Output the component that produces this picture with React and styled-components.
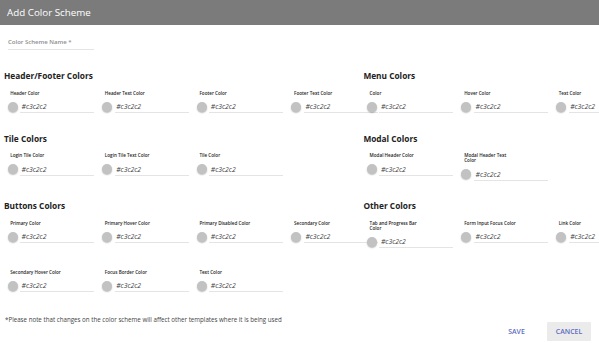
import React from 'react';
import styled, { createGlobalStyle } from 'styled-components';

const GlobalStyle = createGlobalStyle`
    html, body {
        margin: 0;
        padding: 0;
        background: #fff;
        overflow: hidden;
    }
    body {
        font-family: "Open Sans", "Noto Sans", sans-serif;
        color: #333;
    }
`;

const HEX = '#c3c2c2';

const sections = [
    {
        title: 'Header/Footer Colors',
        rows: [['Header Color', 'Header Text Color', 'Footer Color', 'Footer Text Color']],
    },
    {
        title: 'Menu Colors',
        rows: [['Color', 'Hover Color', 'Text Color']],
    },
    {
        title: 'Tile Colors',
        rows: [['Login Tile Color', 'Login Tile Text Color', 'Tile Color']],
    },
    {
        title: 'Modal Colors',
        rows: [['Modal Header Color', 'Modal Header Text Color']],
    },
    {
        title: 'Buttons Colors',
        rows: [
            ['Primary Color', 'Primary Hover Color', 'Primary Disabled Color', 'Secondary Color'],
            ['Secondary Hover Color', 'Focus Border Color', 'Text Color'],
        ],
    },
    {
        title: 'Other Colors',
        rows: [['Tab and Progress Bar Color', 'Form Input Focus Color', 'Link Color']],
    },
];

const ColorField = ({ label }) => (
    <Field>
        <FieldLabel>{label}</FieldLabel>
        <FieldRow>
            <Swatch color={HEX} />
            <HexInput>{HEX}</HexInput>
        </FieldRow>
    </Field>
);

const App = () => {
    return (
        <>
            <GlobalStyle />
            <Header>
                <Title>Add Color Scheme</Title>
            </Header>
            <Body>
                <NameField>
                    <NameLabel>Color Scheme Name *</NameLabel>
                    <NameLine />
                </NameField>
                <SectionsGrid>
                    {sections.map((s) => (
                        <Section key={s.title}>
                            <SectionTitle>{s.title}</SectionTitle>
                            <Rows>
                                {s.rows.map((row, i) => (
                                    <Row key={i}>
                                        {row.map((label) => (
                                            <ColorField key={label} label={label} />
                                        ))}
                                    </Row>
                                ))}
                            </Rows>
                        </Section>
                    ))}
                </SectionsGrid>
                <Footer>
                    <Note>*Please note that changes on the color scheme will affect other templates where it is being used</Note>
                    <Actions>
                        <ActionButton>SAVE</ActionButton>
                        <ActionButton filled>CANCEL</ActionButton>
                    </Actions>
                </Footer>
            </Body>
        </>
    );
};

const Header = styled.div`
    height: 25px;
    background-color: #7b7b7b;
    display: flex;
    align-items: center;
    padding-left: 7px;
`;

const Title = styled.h1`
    margin: 0;
    font-size: 9.8px;
    font-weight: 400;
    color: #fff;
    line-height: 12px;
`;

const Body = styled.div`
    width: 599px;
`;

const NameField = styled.div`
    margin: 13px 0 0 8px;
    width: 86px;
`;

const NameLabel = styled.div`
    font-size: 6px;
    line-height: 8px;
    font-weight: 600;
    color: #8c8c8c;
`;

const NameLine = styled.div`
    height: 3px;
    border-bottom: 1px solid #e4e4e4;
`;

const SectionsGrid = styled.div`
    display: grid;
    grid-template-columns: 60% 40%;
    row-gap: 19px;
    margin-top: 20px;
`;

const Section = styled.div`
    padding-left: 4px;
    min-width: 0;
`;

const SectionTitle = styled.h2`
    margin: 0 0 8.5px;
    font-size: 8.3px;
    line-height: 12px;
    font-weight: 700;
    color: #222;
    white-space: nowrap;
`;

const Rows = styled.div`
    display: flex;
    flex-direction: column;
    gap: 26px;
    padding-left: 3.5px;
`;

const Row = styled.div`
    display: flex;
    align-items: flex-start;
`;

const Field = styled.div`
    flex: 0 0 94.6px;
    width: 94.6px;
`;

const FieldLabel = styled.div`
    padding-left: 2.7px;
    max-width: 52px;
    font-size: 4.6px;
    line-height: 5px;
    font-weight: 600;
    color: #222;
    margin-bottom: 4px;
`;

const FieldRow = styled.div`
    display: flex;
    align-items: center;
    height: 14px;
`;

const Swatch = styled.span`
    flex: 0 0 10px;
    width: 10px;
    height: 10px;
    border-radius: 50%;
    background-color: ${(p) => p.color};
    box-shadow: 0 1px 1.5px rgba(0, 0, 0, 0.28);
`;

const HexInput = styled.div`
    margin-left: 2.6px;
    width: 74px;
    height: 13px;
    box-sizing: border-box;
    padding-left: 1.5px;
    border-bottom: 1px solid #e4e4e4;
    font-size: 6.8px;
    line-height: 13px;
    font-style: italic;
    color: #3a3a3a;
`;

const Footer = styled.div`
    margin-top: 23.5px;
    display: flex;
    flex-direction: column;
`;

const Note = styled.p`
    margin: 0 0 0 5px;
    font-size: 6.2px;
    line-height: 8px;
    color: #444;
`;

const Actions = styled.div`
    display: flex;
    justify-content: flex-end;
    gap: 8.5px;
    padding-right: 8px;
    margin-top: -2px;
`;

const ActionButton = styled.button`
    width: 44px;
    height: 18.5px;
    padding: 0;
    border: none;
    border-radius: 1px;
    font-family: "Open Sans", "Noto Sans", sans-serif;
    font-size: 6.9px;
    font-weight: 600;
    color: #5c6bc0;
    background-color: ${(p) => (p.filled ? '#ebebeb' : 'transparent')};
`;

export default App;
